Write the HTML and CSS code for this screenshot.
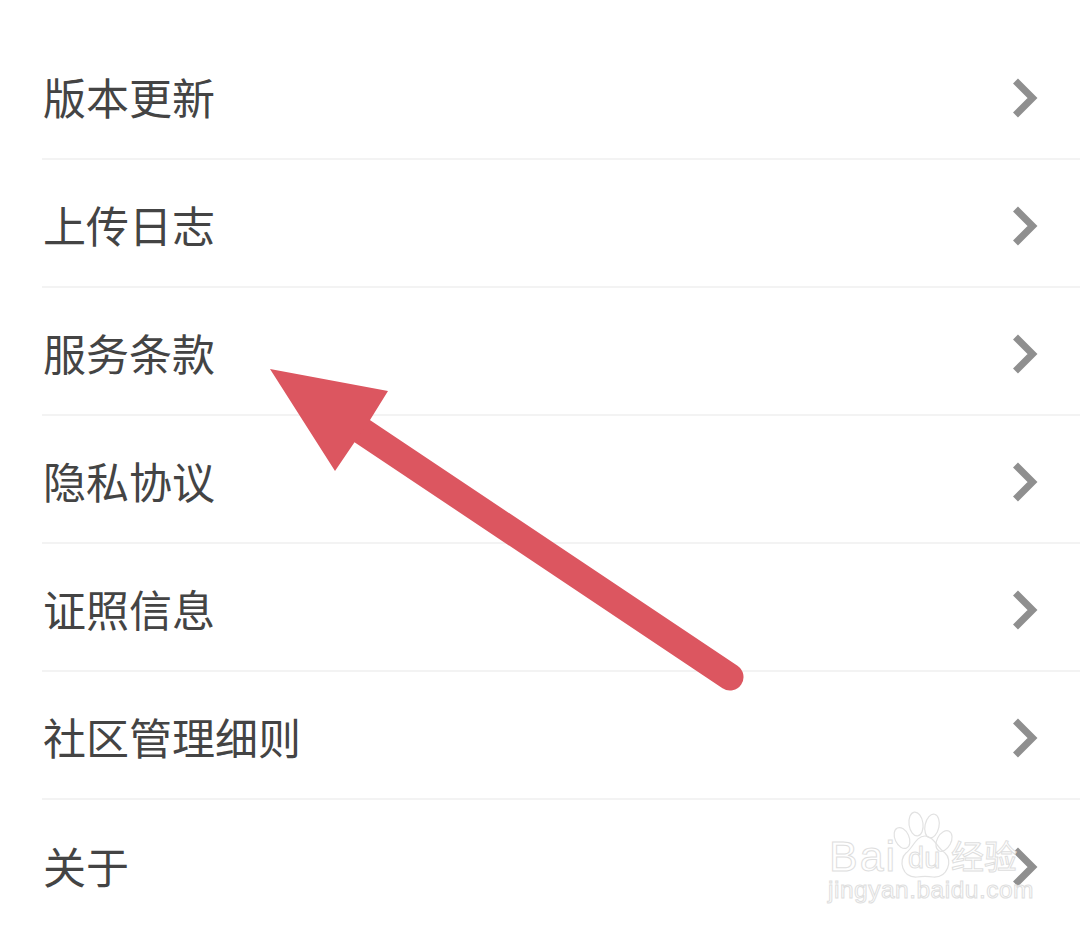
FILE: index.html
```html
<!DOCTYPE html>
<html lang="zh-CN">

<head>
  <meta charset="UTF-8">
  <meta name="viewport" content="width=device-width, initial-scale=1.0">
  <title>设置</title>
  <link rel="stylesheet" href="styles.css">
</head>

<body>
  <ul class="menu">
    <li class="menu-item"><span class="menu-label">版本更新</span><svg class="chevron" viewBox="0 0 28 42"><path d="M3.5 4 L20.5 21 L3.5 38" /></svg></li>
    <li class="menu-item"><span class="menu-label">上传日志</span><svg class="chevron" viewBox="0 0 28 42"><path d="M3.5 4 L20.5 21 L3.5 38" /></svg></li>
    <li class="menu-item"><span class="menu-label">服务条款</span><svg class="chevron" viewBox="0 0 28 42"><path d="M3.5 4 L20.5 21 L3.5 38" /></svg></li>
    <li class="menu-item"><span class="menu-label">隐私协议</span><svg class="chevron" viewBox="0 0 28 42"><path d="M3.5 4 L20.5 21 L3.5 38" /></svg></li>
    <li class="menu-item"><span class="menu-label">证照信息</span><svg class="chevron" viewBox="0 0 28 42"><path d="M3.5 4 L20.5 21 L3.5 38" /></svg></li>
    <li class="menu-item"><span class="menu-label">社区管理细则</span><svg class="chevron" viewBox="0 0 28 42"><path d="M3.5 4 L20.5 21 L3.5 38" /></svg></li>
    <li class="menu-item"><span class="menu-label">关于</span><svg class="chevron" viewBox="0 0 28 42"><path d="M3.5 4 L20.5 21 L3.5 38" /></svg></li>
  </ul>

  <!-- annotation arrow drawn over the list -->
  <svg class="overlay" viewBox="0 0 1080 928">
    <line class="arrow-shaft" x1="362" y1="431" x2="730" y2="677" />
    <polygon class="arrow-head" points="270,369 388,391 370,420 354,443 335,471" />
  </svg>

  <!-- watermark -->
  <svg class="overlay" viewBox="0 0 1080 928">
    <g class="paw">
      <ellipse cx="902" cy="838" rx="7" ry="11" transform="rotate(-25 902 838)" />
      <ellipse cx="916" cy="824" rx="7" ry="12" transform="rotate(-8 916 824)" />
      <ellipse cx="932" cy="826" rx="7" ry="12" transform="rotate(12 932 826)" />
      <ellipse cx="944" cy="841" rx="7" ry="11" transform="rotate(28 944 841)" />
      <path d="M925 836 C934 836 937 848 945 853 C953 860 948 878 933 877 C927 876 923 876 917 877 C902 878 898 860 906 853 C913 848 916 836 925 836 Z" />
    </g>
    <text class="wm wm-bai" x="829" y="871">Bai</text>
    <text class="wm wm-du" x="908" y="868">du</text>
    <text class="wm wm-jy" x="951" y="869">经验</text>
    <text class="wm wm-url" x="828" y="898">jingyan.baidu.com</text>
  </svg>
</body>

</html>
```

FILE: styles.css
```css
html,
body {
  margin: 0;
  padding: 0;
  height: 928px;
  overflow: hidden;
  background: #fff;
}

body {
  position: relative;
  font-family: "Noto Sans CJK SC", "Liberation Sans", sans-serif;
}

.menu {
  list-style: none;
  margin: 0;
  padding: 32px 0 0 42px;
}

.menu-item {
  display: flex;
  align-items: center;
  justify-content: space-between;
  box-sizing: border-box;
  height: 128px;
  padding: 0 40px 0 1px;
  border-bottom: 2px solid #f3f3f3;
}

.menu-item:last-child {
  border-bottom: none;
}

.menu-label {
  margin-top: 1px;
  font-size: 43px;
  line-height: 60px;
  color: #444;
}

.chevron {
  width: 28px;
  height: 42px;
  margin-top: 5px;
  fill: none;
  stroke: #8f8f8f;
  stroke-width: 7px;
}

.overlay {
  position: absolute;
  left: 0;
  top: 0;
  width: 1080px;
  height: 928px;
}

.arrow-shaft {
  stroke: #dc5660;
  stroke-width: 27px;
  stroke-linecap: round;
}

.arrow-head {
  fill: #dc5660;
}

.paw path,
.paw ellipse {
  fill: none;
  stroke: #e2e2e2;
  stroke-width: 1.2px;
}

.wm {
  fill: #fff;
  stroke: #dedede;
  stroke-width: 1px;
  font-family: "Liberation Sans", "Noto Sans CJK SC", sans-serif;
}

.wm-bai {
  font-size: 43px;
  letter-spacing: 2px;
}

.wm-du {
  font-size: 29px;
}

.wm-jy {
  font-size: 33px;
}

.wm-url {
  font-size: 24.5px;
  letter-spacing: 0.5px;
}
```
